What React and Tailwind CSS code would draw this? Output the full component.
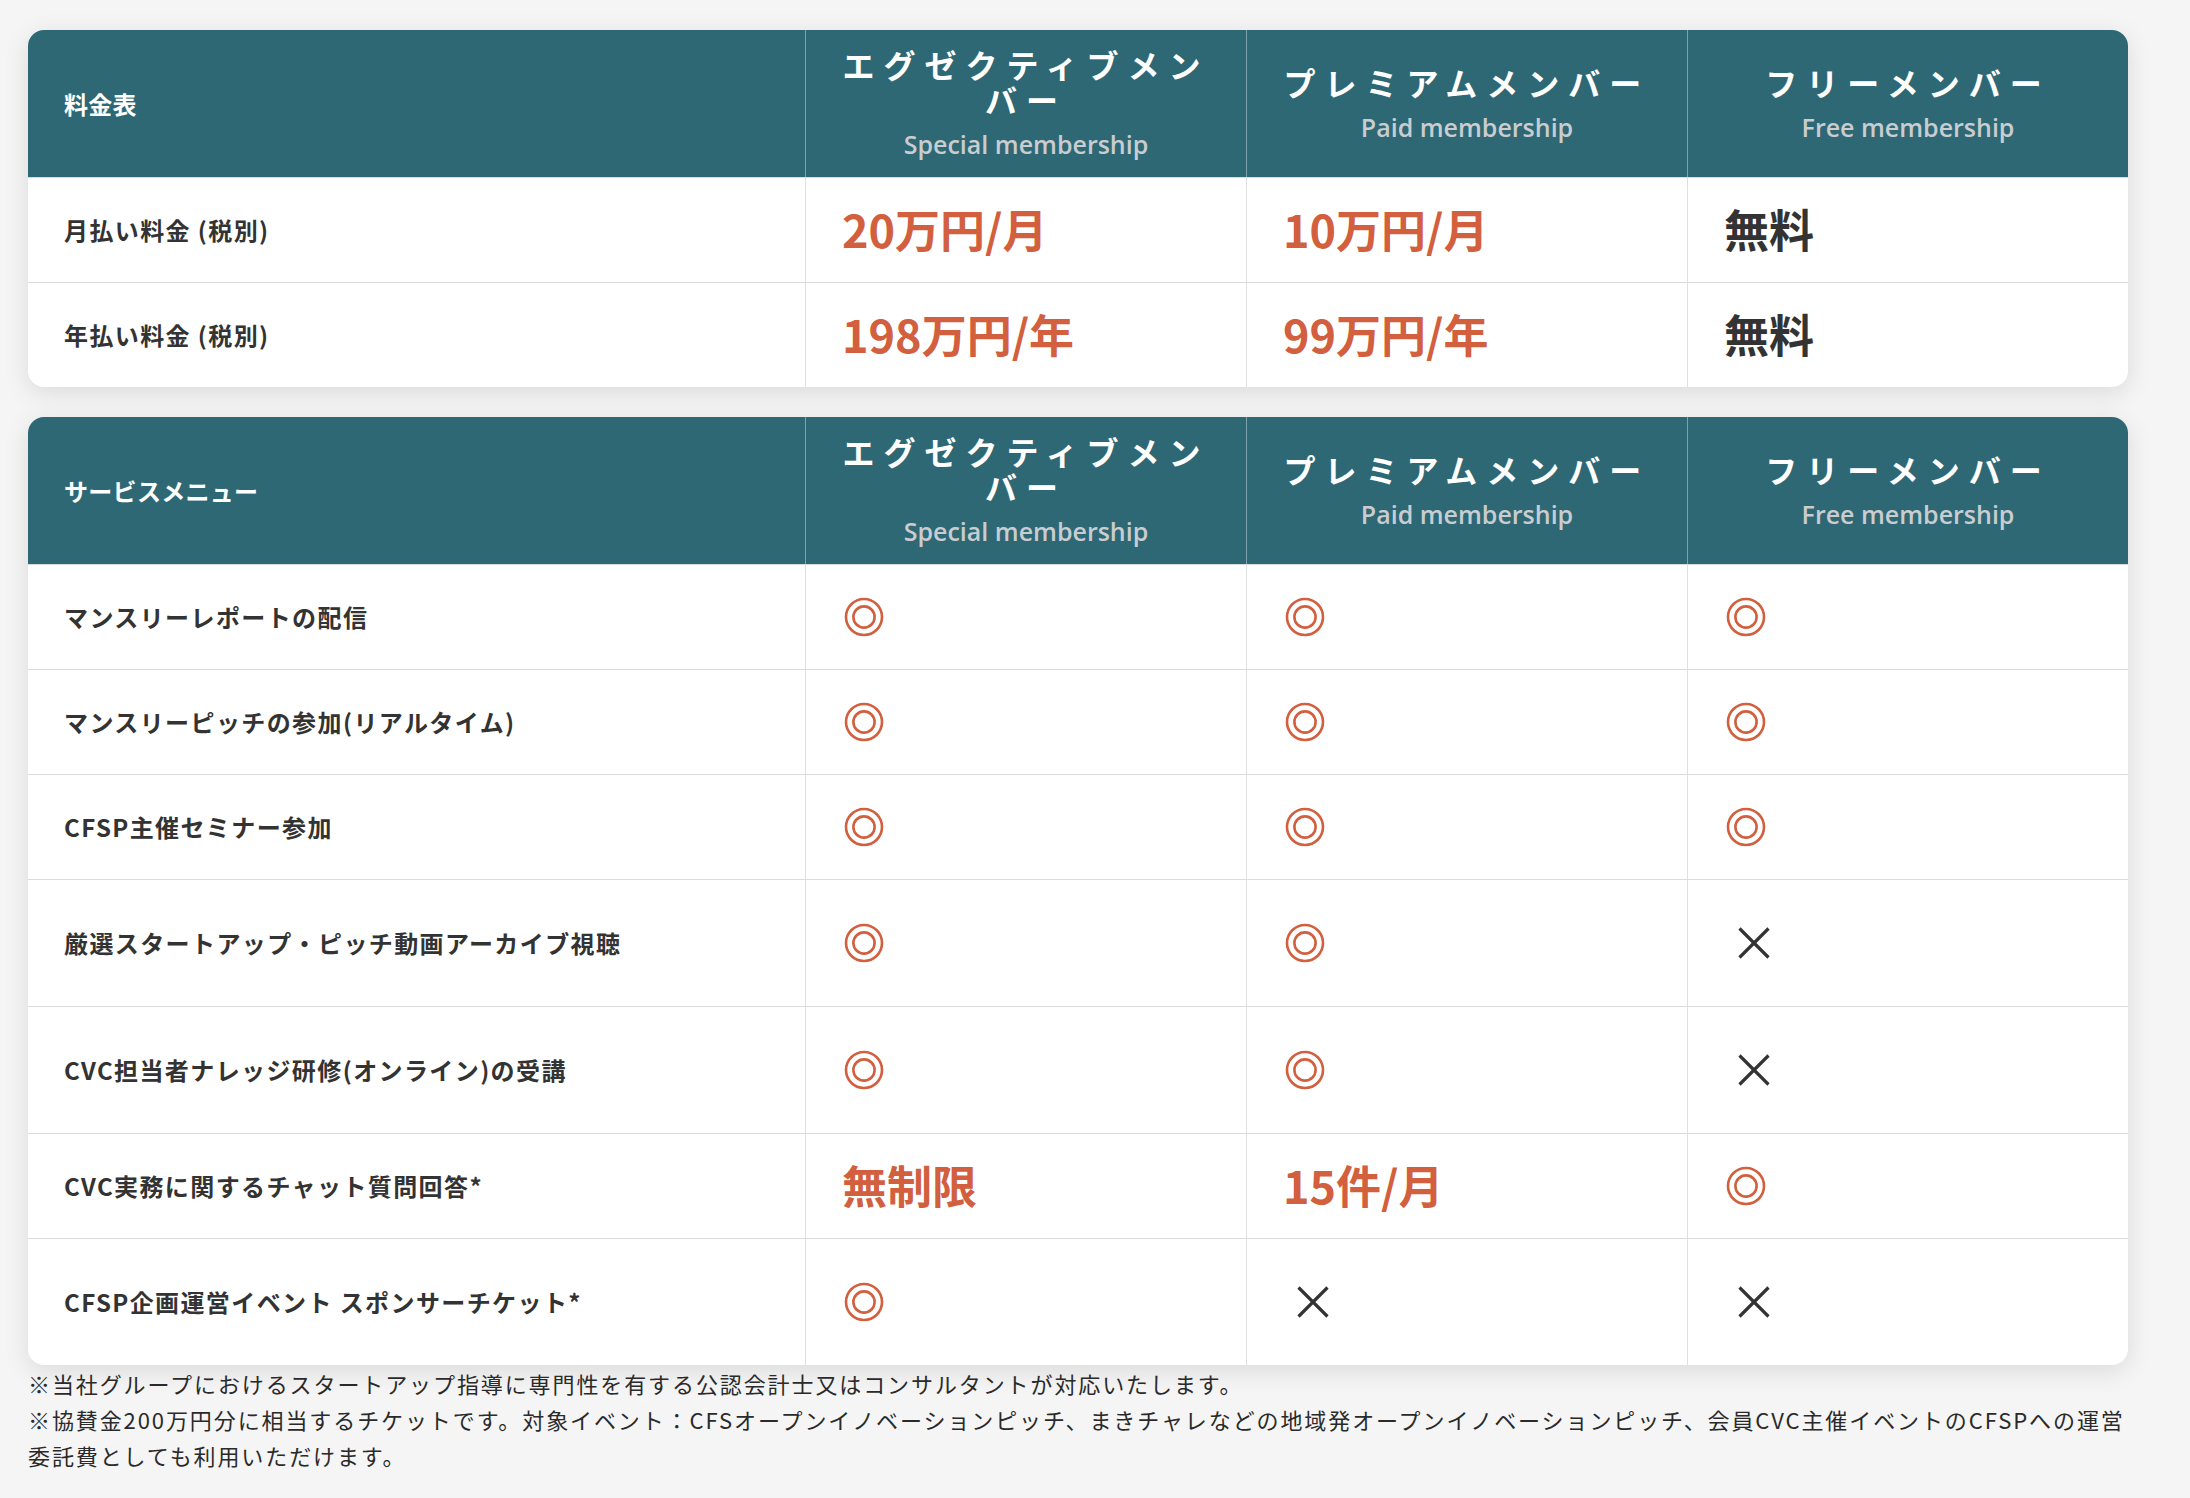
import React from "react";

const JP = { fontFamily: '"Noto Sans CJK JP", "Noto Sans", sans-serif' };
const EN = { fontFamily: '"Open Sans", "Noto Sans", sans-serif' };

function Double() {
  return (
    <svg width="40" height="40" viewBox="0 0 40 40" className="ml-[2px] block">
      <circle cx="20" cy="20" r="18" fill="none" stroke="#d25f3e" strokeWidth="2.6" />
      <circle cx="20" cy="20" r="10.6" fill="none" stroke="#d25f3e" strokeWidth="2.6" />
    </svg>
  );
}

function Cross() {
  return (
    <svg width="34" height="34" viewBox="0 0 34 34" className="ml-[13px] block">
      <line x1="2.5" y1="2.5" x2="31.5" y2="31.5" stroke="#333" strokeWidth="3.2" />
      <line x1="31.5" y1="2.5" x2="2.5" y2="31.5" stroke="#333" strokeWidth="3.2" />
    </svg>
  );
}

function Cell({ v }) {
  if (v === "o") return <Double />;
  if (v === "x") return <Cross />;
  if (v.dark)
    return (
      <span className="-mt-[3px] text-[45px] font-bold leading-none text-[#333333]">{v.t}</span>
    );
  return <span className="-mt-[3px] text-[45px] font-bold leading-none text-[#d25f3e]">{v}</span>;
}

const heads = [
  { jp: "エグゼクティブメンバー", en: "Special membership" },
  { jp: "プレミアムメンバー", en: "Paid membership" },
  { jp: "フリーメンバー", en: "Free membership" },
];

function Table({ title, rows }) {
  return (
    <div className="w-[2100px] overflow-hidden rounded-2xl bg-white shadow-[0_6px_26px_rgba(0,0,0,0.11)]">
      <div className="grid grid-cols-[777px_441px_441px_441px] bg-[#2e6875]">
        <div className="flex h-[147px] items-center px-9 text-[24px] font-bold tracking-[0.3px] text-white">
          {title}
        </div>
        {heads.map((h) => (
          <div
            key={h.en}
            className="flex h-[147px] flex-col items-center justify-center border-l border-[#7ea2aa] px-4 text-center"
          >
            <div className="text-[32px] font-bold leading-[35px] tracking-[9px] text-white">{h.jp}</div>
            <div
              style={EN}
              className="mt-[11px] text-[25px] font-semibold leading-[32px] text-[#c9cdd0]"
            >
              {h.en}
            </div>
          </div>
        ))}
      </div>
      {rows.map((r, i) => (
        <div
          key={i}
          className={`grid grid-cols-[777px_441px_441px_441px] border-t border-[#d9dcde] ${
            r.tall ? "h-[127px]" : "h-[105px]"
          }`}
        >
          <div className="flex items-center whitespace-pre px-9 text-[24px] font-bold tracking-[1.4px] text-[#333333]">
            {r.label}
          </div>
          {r.vals.map((v, j) => (
            <div key={j} className="flex items-center border-l border-[#e0e0e0] px-9">
              <Cell v={v} />
            </div>
          ))}
        </div>
      ))}
    </div>
  );
}

const free = { dark: true, t: "無料" };

const rows1 = [
  { label: "月払い料金 (税別)", vals: ["20万円/月", "10万円/月", free] },
  { label: "年払い料金 (税別)", vals: ["198万円/年", "99万円/年", free] },
];

const rows2 = [
  { label: "マンスリーレポートの配信", vals: ["o", "o", "o"] },
  { label: "マンスリーピッチの参加(リアルタイム)", vals: ["o", "o", "o"] },
  { label: "CFSP主催セミナー参加", vals: ["o", "o", "o"] },
  { label: "厳選スタートアップ・ピッチ動画アーカイブ視聴", vals: ["o", "o", "x"], tall: true },
  { label: "CVC担当者ナレッジ研修(オンライン)の受講", vals: ["o", "o", "x"], tall: true },
  { label: "CVC実務に関するチャット質問回答*", vals: ["無制限", "15件/月", "o"] },
  { label: "CFSP企画運営イベント スポンサーチケット*", vals: ["o", "x", "x"], tall: true },
];

export default function App() {
  return (
    <div style={JP} className="min-h-screen bg-[#f5f5f5] pl-[28px] pt-[30px] text-[#333333]">
      <Table title="料金表" rows={rows1} />
      <div className="h-[30px]" />
      <Table title="サービスメニュー" rows={rows2} />
      <div className="w-[2100px] whitespace-nowrap text-[22px] leading-[36px] tracking-[1.9px] text-[#2a2a2a]">
        <p>※当社グループにおけるスタートアップ指導に専門性を有する公認会計士又はコンサルタントが対応いたします。</p>
        <p>
          ※協賛金200万円分に相当するチケットです。対象イベント：CFSオープンイノベーションピッチ、まきチャレなどの地域発オープンイノベーションピッチ、会員CVC主催イベントのCFSPへの運営
          <br />
          委託費としても利用いただけます。
        </p>
      </div>
    </div>
  );
}
